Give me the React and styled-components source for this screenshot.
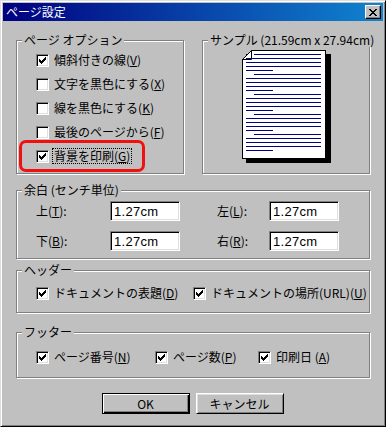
import React from 'react';
import styled, { createGlobalStyle } from 'styled-components';

const GlobalStyle = createGlobalStyle`
  html, body {
    margin: 0;
    padding: 0;
    background: #c0c0c0;
  }
  body {
    font-family: "Noto Sans CJK JP", "Liberation Sans", sans-serif;
    font-size: 12px;
    color: #000;
  }
`;

const pageLines = Array.from({ length: 25 }, (_, i) => {
  const pos = i % 5;
  if (pos === 0) return { y: 4 + i * 4, x1: 12, x2: 79 };
  if (pos === 4) return { y: 4 + i * 4, x1: 4, x2: 31 };
  return { y: 4 + i * 4, x1: 4, x2: 79 };
});

const CheckMark = () => (
  <svg width="9" height="9" viewBox="0 0 9 9" shapeRendering="crispEdges">
    <path
      transform="translate(1 1)"
      d="M6 0h1v1h-1z M5 1h2v1h-2z M0 2h1v1h-1z M4 2h3v1h-3z M0 3h2v1h-2z M3 3h3v1h-3z M0 4h5v1h-5z M1 5h3v1h-3z M2 6h1v1h-1z"
      fill="#000"
    />
  </svg>
);

const CloseGlyph = () => (
  <svg width="8" height="7" viewBox="0 0 8 7" shapeRendering="crispEdges">
    <path
      d="M0 0h2v1h-2z M6 0h2v1h-2z M1 1h2v1h-2z M5 1h2v1h-2z M2 2h4v1h-4z M3 3h2v1h-2z M2 4h4v1h-4z M1 5h2v1h-2z M5 5h2v1h-2z M0 6h2v1h-2z M6 6h2v1h-2z"
      fill="#000"
    />
  </svg>
);

const PagePreview = () => (
  <svg width="89" height="113" viewBox="0 0 89 113" shapeRendering="crispEdges">
    <rect x="4" y="4" width="85" height="109" fill="#000" />
    <path d="M9.5 0.5 H83.5 V108.5 H0.5 V9.5 Z" fill="#fff" stroke="#000" />
    <path d="M0.5 9.5 L9.5 0.5 V9.5 Z" fill="#fff" stroke="#000" shapeRendering="auto" />
    {pageLines.map((l) => (
      <rect key={l.y} x={l.x1} y={l.y} width={l.x2 - l.x1} height="1" fill="#000080" />
    ))}
  </svg>
);

const Check = ({ checked }) => <Box>{checked && <CheckMark />}</Box>;

const Option = ({ checked = true, children, focused, highlighted, width }) => (
  <OptionRow $highlighted={highlighted} $width={width}>
    <Check checked={checked} />
    <OptionText $focused={focused}>{children}</OptionText>
  </OptionRow>
);

const App = () => {
  return (
    <>
      <GlobalStyle />
      <Window>
        <TitleBar>
          <TitleText>ページ設定</TitleText>
          <CloseButton>
            <CloseGlyph />
          </CloseButton>
        </TitleBar>

        <Body>
          <TopRow>
            <Group $width={168} $height={134}>
              <Legend>ページ オプション</Legend>
              <OptionList>
                <Option checked>
                  傾斜付きの線(<U>V</U>)
                </Option>
                <Option checked={false}>
                  文字を黒色にする(<U>X</U>)
                </Option>
                <Option checked={false}>
                  線を黒色にする(<U>K</U>)
                </Option>
                <Option checked={false}>
                  最後のページから(<U>F</U>)
                </Option>
                <Option checked focused highlighted>
                  背景を印刷(<U>G</U>)
                </Option>
              </OptionList>
            </Group>

            <Group $width={168} $height={134}>
              <Legend>サンプル (21.59cm x 27.94cm)</Legend>
              <Sample>
                <PagePreview />
              </Sample>
            </Group>
          </TopRow>

          <Group $height={69} $gap={16}>
            <Legend>余白 (センチ単位)</Legend>
            <MarginGrid>
              <Field>
                <FieldLabel $width={74}>
                  上(<U>T</U>):
                </FieldLabel>
                <TextBox>1.27cm</TextBox>
              </Field>
              <Field>
                <FieldLabel $width={52}>
                  左(<U>L</U>):
                </FieldLabel>
                <TextBox>1.27cm</TextBox>
              </Field>
              <Field>
                <FieldLabel $width={74}>
                  下(<U>B</U>):
                </FieldLabel>
                <TextBox>1.27cm</TextBox>
              </Field>
              <Field>
                <FieldLabel $width={52}>
                  右(<U>R</U>):
                </FieldLabel>
                <TextBox>1.27cm</TextBox>
              </Field>
            </MarginGrid>
          </Group>

          <Group $height={43} $gap={11}>
            <Legend>ヘッダー</Legend>
            <InlineOptions $top={10}>
              <Option width={157}>
                ドキュメントの表題(<U>D</U>)
              </Option>
              <Option>
                ドキュメントの場所(URL)(<U>U</U>)
              </Option>
            </InlineOptions>
          </Group>

          <Group $height={46} $gap={19}>
            <Legend>フッター</Legend>
            <InlineOptions $top={12}>
              <Option width={119}>
                ページ番号(<U>N</U>)
              </Option>
              <Option width={103}>
                ページ数(<U>P</U>)
              </Option>
              <Option>
                印刷日 (<U>A</U>)
              </Option>
            </InlineOptions>
          </Group>

          <ButtonRow>
            <Button $default>OK</Button>
            <Button>キャンセル</Button>
          </ButtonRow>
        </Body>
      </Window>
    </>
  );
};

const Window = styled.div`
  width: 386px;
  height: 427px;
  box-sizing: border-box;
  background: #c0c0c0;
  border-top: 1px solid #dfdfdf;
  border-left: 1px solid #dfdfdf;
  border-right: 1px solid #000;
  border-bottom: 1px solid #000;
  box-shadow: inset 1px 1px 0 #fff, inset -1px -1px 0 #808080;
  padding: 2px;
  display: flex;
  flex-direction: column;
`;

const TitleBar = styled.div`
  height: 18px;
  display: flex;
  align-items: center;
  justify-content: space-between;
  padding: 0 2px 0 3px;
  background: linear-gradient(to right, #000080, #1084d0);
`;

const TitleText = styled.span`
  color: #fff;
  font-size: 12px;
  line-height: 14px;
`;

const CloseButton = styled.div`
  width: 16px;
  height: 14px;
  box-sizing: border-box;
  display: flex;
  align-items: center;
  justify-content: center;
  background: #c0c0c0;
  border-top: 1px solid #fff;
  border-left: 1px solid #fff;
  border-right: 1px solid #000;
  border-bottom: 1px solid #000;
  box-shadow: inset -1px -1px 0 #808080;
`;

const Body = styled.div`
  display: flex;
  flex-direction: column;
  padding: 19px 13px 0 13px;
`;

const TopRow = styled.div`
  display: flex;
  gap: 18px;
`;

const Group = styled.div`
  position: relative;
  box-sizing: border-box;
  width: ${(p) => (p.$width ? `${p.$width}px` : '354px')};
  height: ${(p) => p.$height}px;
  margin-top: ${(p) => p.$gap || 0}px;
  border: 1px solid #808080;
  box-shadow: inset 1px 1px 0 #fff, 1px 1px 0 #fff;
`;

const Legend = styled.span`
  position: absolute;
  top: -8px;
  left: 5px;
  padding: 0 2px;
  background: #c0c0c0;
  line-height: 14px;
  white-space: nowrap;
`;

const U = styled.span`
  text-decoration: underline;
`;

const OptionList = styled.div`
  display: flex;
  flex-direction: column;
  padding: 7px 0 0 19px;
`;

const OptionRow = styled.div`
  position: relative;
  display: flex;
  align-items: center;
  height: 24px;
  width: ${(p) => (p.$width ? `${p.$width}px` : 'fit-content')};
  white-space: nowrap;

  ${(p) =>
    p.$highlighted &&
    `
    &::after {
      content: '';
      position: absolute;
      top: -4px;
      bottom: -4px;
      left: -17px;
      right: -14px;
      border: 3px solid #f01010;
      border-radius: 7px;
    }
  `}
`;

const Box = styled.div`
  flex: none;
  width: 13px;
  height: 13px;
  box-sizing: border-box;
  display: flex;
  align-items: center;
  justify-content: center;
  background: #fff;
  border-top: 1px solid #808080;
  border-left: 1px solid #808080;
  border-right: 1px solid #fff;
  border-bottom: 1px solid #fff;
  box-shadow: inset 1px 1px 0 #000, inset -1px -1px 0 #dfdfdf;
`;

const OptionText = styled.span`
  margin-left: ${(p) => (p.$focused ? 4 : 5)}px;
  padding: 0 ${(p) => (p.$focused ? 1 : 0)}px;
  line-height: 14px;
  outline: ${(p) => (p.$focused ? '1px dotted #000' : 'none')};
`;

const Sample = styled.div`
  display: flex;
  justify-content: center;
  padding: 9px 0 0 0;
`;

const MarginGrid = styled.div`
  display: grid;
  grid-template-columns: 144px 122px;
  column-gap: 37px;
  row-gap: 10px;
  padding: 10px 0 0 19px;
`;

const Field = styled.div`
  display: flex;
  align-items: center;
`;

const FieldLabel = styled.span`
  width: ${(p) => p.$width}px;
  line-height: 14px;
`;

const TextBox = styled.div`
  width: 70px;
  height: 20px;
  box-sizing: border-box;
  padding: 0 0 0 3px;
  display: flex;
  align-items: center;
  background: #fff;
  border-top: 1px solid #808080;
  border-left: 1px solid #808080;
  border-right: 1px solid #fff;
  border-bottom: 1px solid #fff;
  box-shadow: inset 1px 1px 0 #000, inset -1px -1px 0 #dfdfdf;
  font-family: "Liberation Sans", sans-serif;
  font-size: 13px;
  letter-spacing: 0.3px;
`;

const InlineOptions = styled.div`
  display: flex;
  padding: ${(p) => p.$top}px 0 0 19px;
`;

const ButtonRow = styled.div`
  display: flex;
  justify-content: center;
  gap: 6px;
  margin-top: 15px;
  padding-right: 1px;
`;

const Button = styled.div`
  width: 88px;
  height: 21px;
  box-sizing: border-box;
  display: flex;
  align-items: center;
  justify-content: center;
  background: #c0c0c0;
  line-height: 14px;
  border: 1px solid ${(p) => (p.$default ? '#000' : '#fff')};
  border-right-color: #000;
  border-bottom-color: #000;
  box-shadow: ${(p) =>
    p.$default
      ? 'inset 1px 1px 0 #fff, inset -1px -1px 0 #000, inset -2px -2px 0 #808080'
      : 'inset 1px 1px 0 #dfdfdf, inset -1px -1px 0 #808080'};
`;

export default App;
